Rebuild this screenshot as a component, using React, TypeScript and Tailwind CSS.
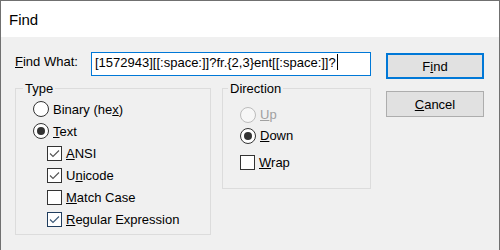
import React from "react";

const U = ({ children }: { children: React.ReactNode }) => (
  <span className="underline decoration-1">{children}</span>
);

function Radio({ checked, disabled }: { checked?: boolean; disabled?: boolean }) {
  return (
    <span
      className={
        "w-[16px] h-[16px] rounded-full border flex items-center justify-center shrink-0 " +
        (disabled ? "border-[#bcbcbc] bg-[#f7f7f7]" : "border-[#333333] bg-white")
      }
    >
      {checked && <span className="w-[8px] h-[8px] rounded-full bg-[#333333]" />}
    </span>
  );
}

function Check({ checked, focus }: { checked?: boolean; focus?: boolean }) {
  return (
    <span
      className={
        "w-[15px] h-[15px] border bg-white flex items-center justify-center shrink-0 " +
        (focus ? "border-[#1f3d5e]" : "border-[#333333]")
      }
    >
      {checked && (
        <svg width="13" height="13" viewBox="0 0 13 13">
          <path
            d="M2 6.5 L5 9.5 L11 3.5"
            fill="none"
            stroke={focus ? "#3c5a78" : "#555555"}
            strokeWidth="1.1"
          />
        </svg>
      )}
    </span>
  );
}

export default function App() {
  return (
    <div className="w-[500px] h-[250px] border-x border-t border-[#707070] flex flex-col font-['Liberation_Sans',Arial,sans-serif] text-[13px] text-black overflow-hidden">
      <div className="h-[36px] bg-white pl-[8px] pt-[10px] text-[15px] leading-[17px]">Find</div>
      <div className="flex-1 bg-[#f0f0f0] flex pl-[14px] pt-[15px]">
        <div className="w-[356px] flex flex-col">
          <div className="flex h-[24px]">
            <div className="w-[76px] pt-[2px] leading-[15px]">
              <U>F</U>ind What:
            </div>
            <div className="w-[280px] h-[24px] border border-[#0078d7] bg-white pl-[3px] pt-[1px] leading-[15px] flex items-start whitespace-nowrap">
              <span className="pt-[1px]">[1572943][[:space:]]?fr.{"{"}2,3{"}"}ent[[:space:]]?</span>
              <span className="inline-block w-px h-[16px] bg-black ml-[1px]" />
            </div>
          </div>
          <div className="flex mt-[5px] gap-[11px] items-start">
            <fieldset className="w-[196px] h-[154px] border border-[#dcdcdc] p-0 m-0">
              <legend className="ml-[7px] px-[2px] leading-[15px]">Type</legend>
              <div className="pt-[2px] flex flex-col">
                <div className="h-[22px] flex items-center pl-[17px] gap-[4px] leading-[15px]">
                  <Radio />
                  <span>
                    Binary (he<U>x</U>)
                  </span>
                </div>
                <div className="h-[22px] flex items-center pl-[17px] gap-[4px] leading-[15px]">
                  <Radio checked />
                  <span>
                    <U>T</U>ext
                  </span>
                </div>
                <div className="h-[22px] flex items-center pl-[31px] gap-[4px] leading-[15px]">
                  <Check checked />
                  <span>
                    <U>A</U>NSI
                  </span>
                </div>
                <div className="h-[22px] flex items-center pl-[31px] gap-[4px] leading-[15px]">
                  <Check checked />
                  <span>
                    U<U>n</U>icode
                  </span>
                </div>
                <div className="h-[22px] flex items-center pl-[31px] gap-[4px] leading-[15px]">
                  <Check />
                  <span>
                    <U>M</U>atch Case
                  </span>
                </div>
                <div className="h-[22px] flex items-center pl-[31px] gap-[4px] leading-[15px]">
                  <Check checked focus />
                  <span>
                    <U>R</U>egular Expression
                  </span>
                </div>
              </div>
            </fieldset>
            <fieldset className="w-[149px] h-[108px] border border-[#dcdcdc] p-0 m-0">
              <legend className="ml-[5px] px-[2px] leading-[15px]">Direction</legend>
              <div className="pt-[8px] flex flex-col">
                <div className="h-[21px] flex items-center pl-[17px] gap-[4px] leading-[15px] text-[#a0a0a0]">
                  <Radio disabled />
                  <span>
                    <U>U</U>p
                  </span>
                </div>
                <div className="h-[21px] flex items-center pl-[17px] gap-[4px] leading-[15px]">
                  <Radio checked />
                  <span>
                    <U>D</U>own
                  </span>
                </div>
                <div className="h-[22px] mt-[5px] flex items-center pl-[17px] gap-[4px] leading-[15px]">
                  <Check />
                  <span>
                    <U>W</U>rap
                  </span>
                </div>
              </div>
            </fieldset>
          </div>
        </div>
        <div className="ml-[15px] pt-[1px] flex flex-col gap-[12px]">
          <div className="w-[98px] h-[26px] border-2 border-[#0078d7] bg-[#e1e1e1] flex items-center justify-center leading-[15px]">
            <span>
              F<U>i</U>nd
            </span>
          </div>
          <div className="w-[98px] h-[26px] border border-[#adadad] bg-[#e1e1e1] flex items-center justify-center leading-[15px]">
            <span>
              <U>C</U>ancel
            </span>
          </div>
        </div>
      </div>
    </div>
  );
}
